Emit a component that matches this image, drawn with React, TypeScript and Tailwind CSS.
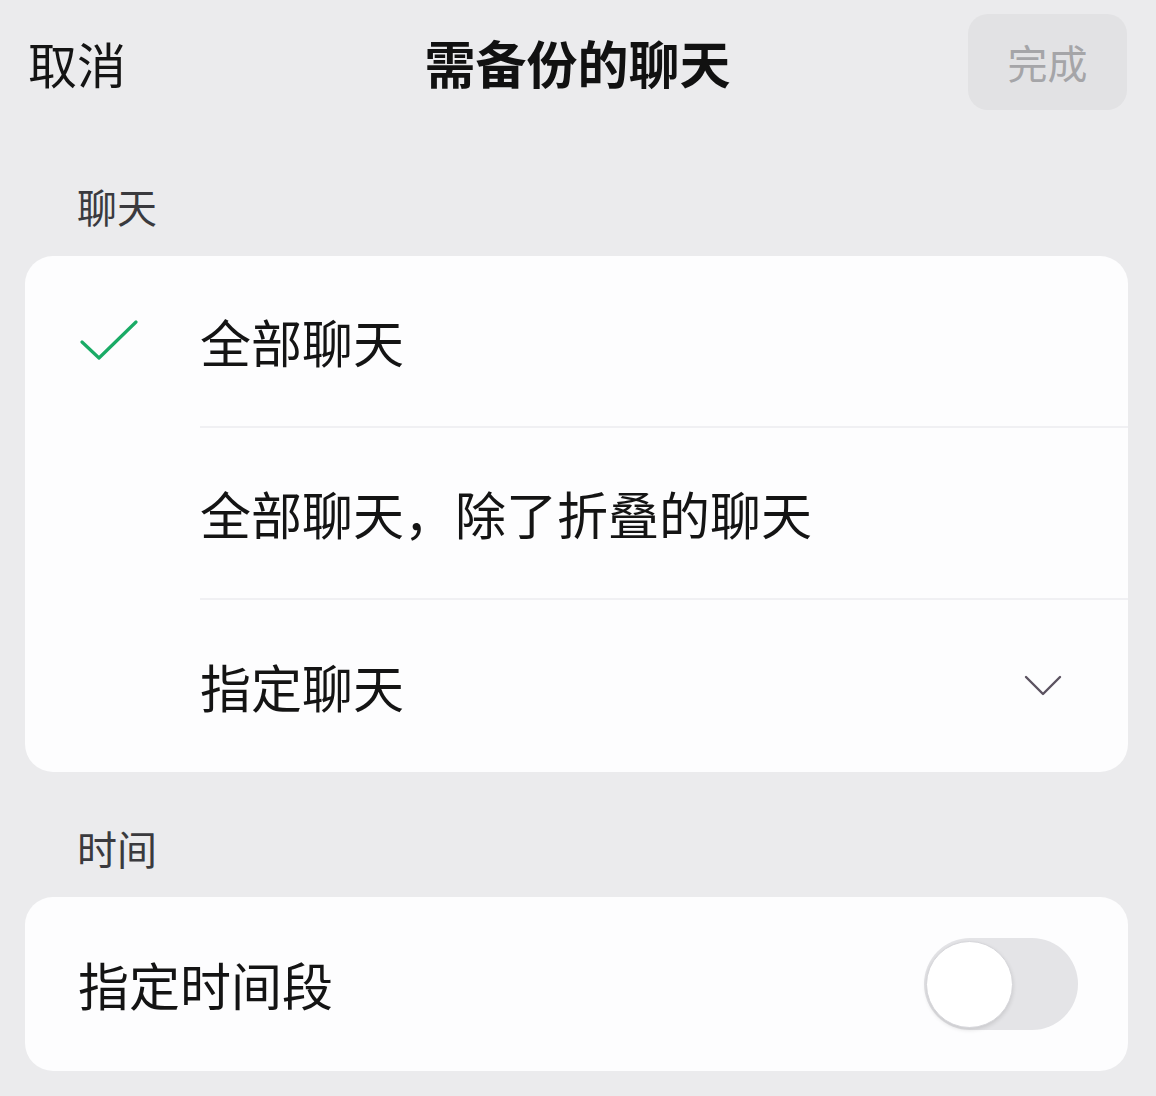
import React from "react";

const font = { fontFamily: '"Noto Sans CJK SC", "Noto Sans", sans-serif' };

function Check() {
  return (
    <svg width="60" height="44" viewBox="0 0 60 44" fill="none">
      <path d="M3 22 L20 38 L57 2" stroke="#1aab66" strokeWidth="3.2" strokeLinecap="round" strokeLinejoin="round" />
    </svg>
  );
}

function Chevron() {
  return (
    <svg width="38" height="22" viewBox="0 0 38 22" fill="none">
      <path d="M2 2 L19 19 L36 2" stroke="#5b5260" strokeWidth="2.4" strokeLinecap="round" strokeLinejoin="round" />
    </svg>
  );
}

function Row({ label, check, chevron, divider }: { label: string; check?: boolean; chevron?: boolean; divider?: boolean }) {
  return (
    <div className="flex h-[172px] items-stretch">
      <div className="flex w-[175px] shrink-0 items-center pl-[54px]">{check ? <Check /> : null}</div>
      <div className={"flex flex-1 items-center pr-[66px] " + (divider ? "border-b-2 border-[#f0f0f3]" : "")}>
        <span className="flex-1 text-[51px] leading-none text-[#141414]">{label}</span>
        {chevron ? <Chevron /> : null}
      </div>
    </div>
  );
}

export default function App() {
  return (
    <div className="h-[1096px] w-full overflow-hidden bg-[#ebebed]" style={font}>
      <div className="grid grid-cols-[1fr_auto_1fr] items-center pl-[28px] pr-[29px] pt-[14px]">
        <span className="text-[49px] leading-none text-[#141414]">取消</span>
        <span className="text-[51px] font-bold leading-none text-[#111111]">需备份的聊天</span>
        <div className="flex justify-end">
          <div className="flex h-[96px] w-[159px] items-center justify-center rounded-[20px] bg-[#e2e2e4] text-[40px] leading-none text-[#a5a5a8]">
            完成
          </div>
        </div>
      </div>

      <div className="mt-[76px] pl-[77px] text-[40px] leading-[40px] text-[#3a3a3e]">聊天</div>

      <div className="ml-[25px] mr-[28px] mt-[30px] overflow-hidden rounded-[28px] bg-[#fdfdfe]">
        <Row label="全部聊天" check divider />
        <Row label="全部聊天，除了折叠的聊天" divider />
        <Row label="指定聊天" chevron />
      </div>

      <div className="mt-[56px] pl-[77px] text-[40px] leading-[40px] text-[#3a3a3e]">时间</div>

      <div className="ml-[25px] mr-[28px] mt-[29px] flex h-[174px] items-center justify-between rounded-[28px] bg-[#fdfdfe] pl-[53px] pr-[50px]">
        <span className="text-[51px] leading-none text-[#141414]">指定时间段</span>
        <div className="relative h-[92px] w-[154px] rounded-full bg-[#e4e4e7]">
          <div className="absolute left-[2px] top-[3px] h-[87px] w-[87px] rounded-full border border-[#d6d6da] bg-white shadow-[0_2px_4px_rgba(0,0,0,0.12)]" />
        </div>
      </div>
    </div>
  );
}
